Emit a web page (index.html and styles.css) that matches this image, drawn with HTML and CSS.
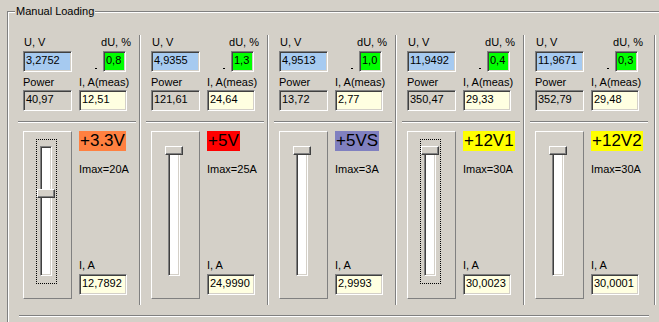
FILE: index.html
```html
<!DOCTYPE html>
<html lang="en">
<head>
    <meta charset="UTF-8">
    <meta name="viewport" content="width=device-width, initial-scale=1.0">
    <title>Manual Loading</title>
    <link rel="stylesheet" href="styles.css">
</head>
<body>
    <div class="group">
        <div class="group-title">Manual Loading</div>
        <div class="channels" id="channels">
            <!-- Channel columns are inserted here -->
        </div>
        <div class="bottom-line"></div>
    </div>

    <script>
        const channels = [
            { u: '3,2752', du: '0,8', power: '40,97', meas: '12,51', name: '+3.3V', tone: 'orange', imax: 20, current: '12,7892', focused: true },
            { u: '4,9355', du: '1,3', power: '121,61', meas: '24,64', name: '+5V', tone: 'red', imax: 25, current: '24,9990', focused: false },
            { u: '4,9513', du: '1,0', power: '13,72', meas: '2,77', name: '+5VS', tone: 'slate', imax: 3, current: '2,9993', focused: false },
            { u: '11,9492', du: '0,4', power: '350,47', meas: '29,33', name: '+12V1', tone: 'yellow', imax: 30, current: '30,0023', focused: true },
            { u: '11,9671', du: '0,3', power: '352,79', meas: '29,48', name: '+12V2', tone: 'yellow', imax: 30, current: '30,0001', focused: false }
        ];

        // thumb travel inside the groove, in pixels
        const TRAVEL = 121;

        function toNumber(text) {
            return parseFloat(text.replace(',', '.'));
        }

        document.addEventListener('DOMContentLoaded', function() {
            const list = document.getElementById('channels');

            list.innerHTML = channels.map(ch => {
                const ratio = Math.min(1, toNumber(ch.current) / ch.imax);
                const offset = Math.floor((1 - ratio) * TRAVEL);

                return `
                <div class="channel">
                    <div class="label-row">
                        <span class="uv-label">U, V</span>
                        <span>dU, %</span>
                    </div>
                    <div class="value-row">
                        <div class="edit edit-volt">${ch.u}</div>
                        <span class="tick"></span>
                        <div class="edit edit-delta">${ch.du}</div>
                    </div>
                    <div class="label-row-2">
                        <span class="power-label">Power</span>
                        <span>I, A(meas)</span>
                    </div>
                    <div class="value-row-2">
                        <div class="edit edit-power">${ch.power}</div>
                        <div class="edit edit-meas">${ch.meas}</div>
                    </div>
                    <div class="divider"></div>
                    <div class="lower">
                        <div class="slider-box">
                            <div class="trackbar ${ch.focused ? 'focused' : ''}">
                                <div class="groove"></div>
                                <div class="thumb" style="top: ${6 + offset}px"></div>
                            </div>
                        </div>
                        <div class="side">
                            <span class="rail rail-${ch.tone}">${ch.name}</span>
                            <span class="imax">Imax=${ch.imax}A</span>
                            <span class="set-label">I, A</span>
                            <div class="edit edit-set">${ch.current}</div>
                        </div>
                    </div>
                </div>`;
            }).join('');
        });
    </script>
</body>
</html>
```

FILE: styles.css
```css
html, body {
    margin: 0;
    padding: 0;
    overflow: hidden;
}

body {
    background-color: #d4d0c8;
    font-family: "Liberation Sans", Arial, sans-serif;
    font-size: 11px;
    line-height: 13px;
    color: #000;
    height: 322px;
}

/* group box with etched frame, its right and bottom edges lie outside the window */
.group {
    width: 652px;
    height: 311px;
    box-sizing: border-box;
    margin: 11px 0 0 7px;
    border-top: 1px solid #808080;
    border-left: 1px solid #808080;
    box-shadow: inset 1px 1px 0 #fff;
}

.group-title {
    display: table;
    margin: -7px 0 0 7px;
    padding: 0 1px;
    background-color: #d4d0c8;
}

.channels {
    display: flex;
    margin: 17px 0 0 3px;
}

.channel {
    width: 128px;
    height: 270px;
    box-sizing: border-box;
    padding: 1px 0 0 11px;
    border-left: 1px solid #808080;
    box-shadow: inset 1px 0 0 #fff;
    display: flex;
    flex-direction: column;
}

.channel:first-child {
    border-left-color: transparent;
    box-shadow: none;
}

.channel:last-child {
    width: 132px;
    border-right: 1px solid #808080;
    box-shadow: inset 1px 0 0 #fff, 1px 0 0 #fff;
}

.label-row {
    display: flex;
    justify-content: space-between;
    width: 108px;
    white-space: nowrap;
}

.uv-label {
    padding-left: 1px;
}

.value-row {
    display: flex;
    margin-top: 2px;
}

.tick {
    align-self: flex-end;
    width: 2px;
    height: 1px;
    margin: 0 6px 3px 23px;
    background-color: #000;
}

.label-row-2 {
    display: flex;
    margin-top: 4px;
    white-space: nowrap;
}

.power-label {
    width: 56px;
}

.value-row-2 {
    display: flex;
    margin-top: 1px;
}

/* sunken edit fields */
.edit {
    box-sizing: border-box;
    height: 21px;
    padding: 2px 2px 0;
    border: 1px solid;
    border-color: #808080 #fff #fff #808080;
    box-shadow: inset 1px 1px 0 #404040, inset -1px -1px 0 #d4d0c8;
    white-space: nowrap;
    overflow: hidden;
}

.edit-volt {
    width: 49px;
    background-color: #a6caf0;
}

.edit-delta {
    width: 23px;
    background-color: #00ff00;
}

.edit-power {
    width: 49px;
    margin-right: 7px;
    background-color: #d4d0c8;
}

.edit-meas,
.edit-set {
    width: 48px;
    background-color: #ffffe1;
}

.divider {
    width: 118px;
    margin: 10px 0 0 -5px;
    border-top: 1px solid #808080;
    border-bottom: 1px solid #fff;
}

.lower {
    display: flex;
    height: 168px;
    margin-top: 8px;
}

/* raised panel holding the trackbar */
.slider-box {
    width: 49px;
    box-sizing: border-box;
    border: 1px solid;
    border-color: #fff #808080 #808080 #fff;
}

.trackbar {
    position: relative;
    width: 21px;
    height: 145px;
    box-sizing: border-box;
    margin: 7px 0 0 12px;
    border: 1px dotted transparent;
}

.trackbar.focused {
    border-color: #000;
}

.groove {
    width: 12px;
    height: 130px;
    box-sizing: border-box;
    margin: 6px 0 0 3px;
    background-color: #fff;
    border: 1px solid;
    border-color: #808080 #fff #fff #808080;
    box-shadow: inset 1px 1px 0 #404040, inset -1px -1px 0 #d4d0c8;
}

.thumb {
    position: absolute;
    left: 0;
    width: 18px;
    height: 9px;
    box-sizing: border-box;
    background-color: #d4d0c8;
    border: 1px solid;
    border-color: #fff #404040 #404040 #fff;
    box-shadow: inset -1px -1px 0 #808080;
}

.side {
    display: flex;
    flex-direction: column;
    align-items: flex-start;
    width: 48px;
    margin-left: 7px;
    padding-bottom: 4px;
    box-sizing: border-box;
}

.rail {
    padding: 0 1px;
    font-size: 17px;
    line-height: 20px;
    white-space: nowrap;
}

.rail-orange {
    background-color: #ff8040;
}

.rail-red {
    background-color: #ff0000;
}

.rail-slate {
    background-color: #8080c0;
}

.rail-yellow {
    background-color: #ffff00;
}

.imax {
    margin-top: 12px;
    white-space: nowrap;
}

.set-label {
    margin-top: auto;
}

.edit-set {
    margin-top: 2px;
}

.bottom-line {
    width: 630px;
    margin: 10px 0 0 11px;
    border-top: 1px solid #808080;
    border-bottom: 1px solid #fff;
}
```
